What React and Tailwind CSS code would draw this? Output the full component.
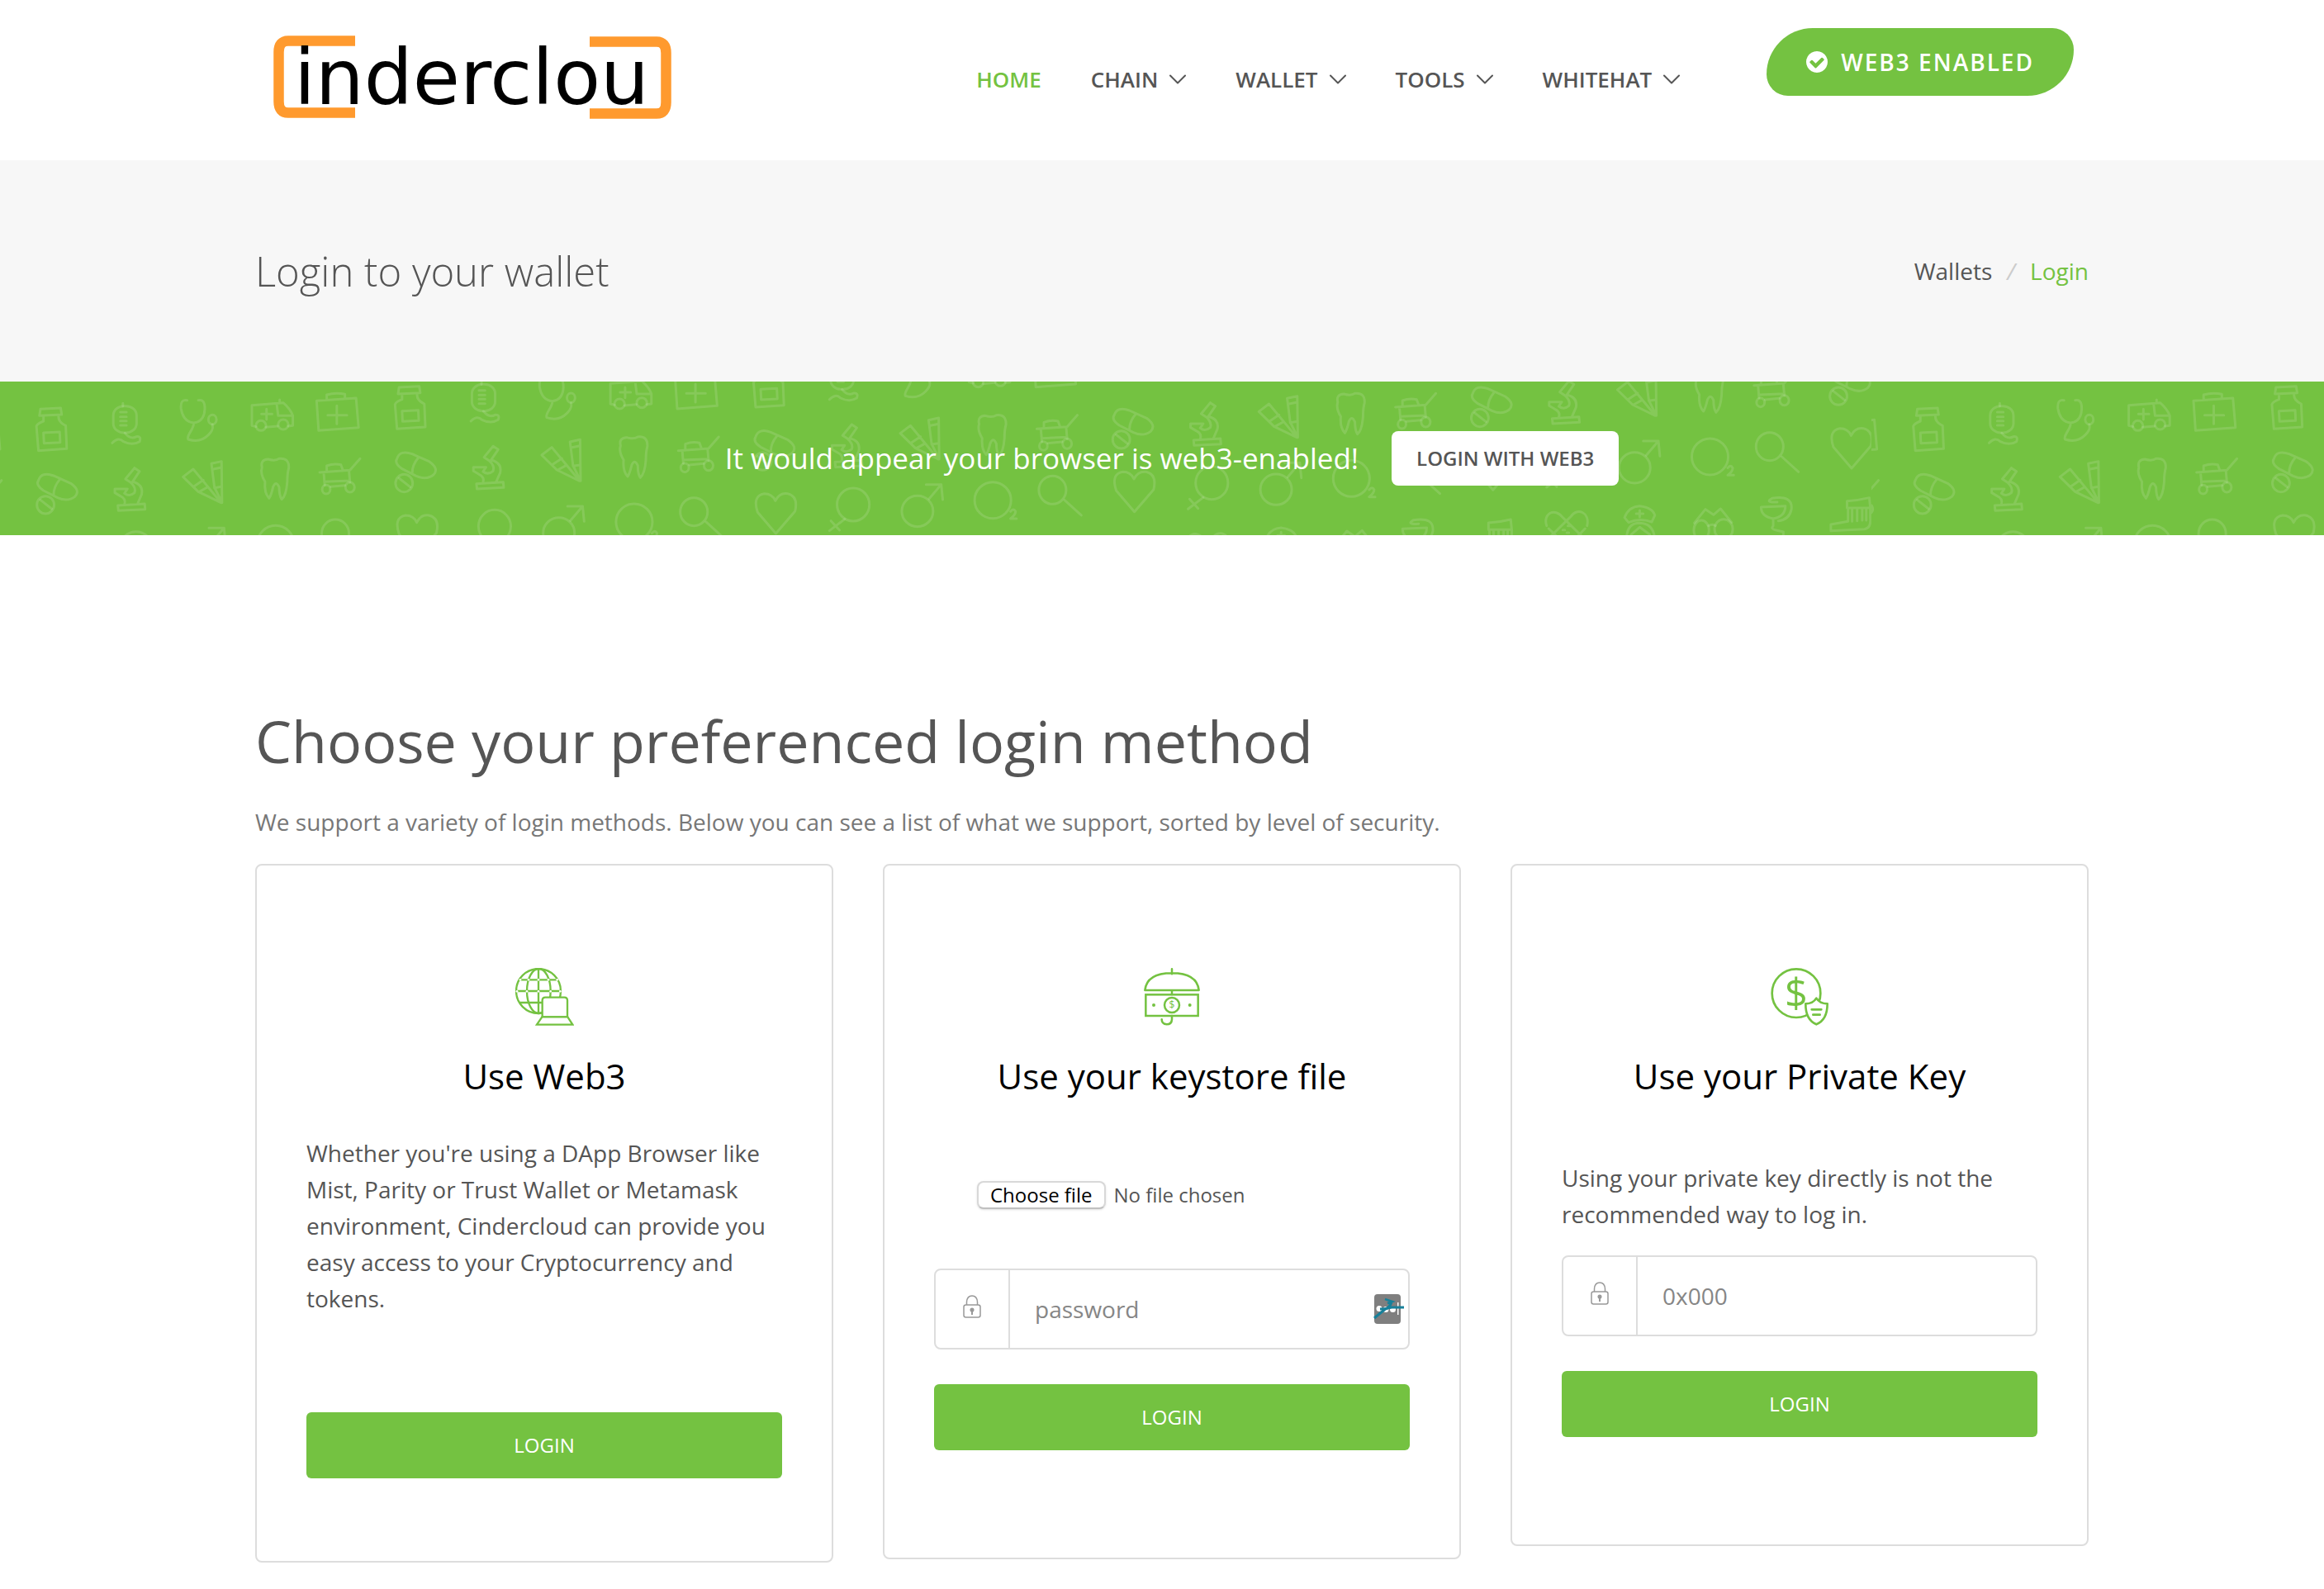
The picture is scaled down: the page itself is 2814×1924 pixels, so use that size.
const NAV = ["Chain", "Wallet", "Tools", "Whitehat"];

function Logo() {
  return (
    <svg viewBox="0 0 482 101" className="h-[101px] w-[482px] overflow-visible" role="img" aria-label="Cindercloud">
      <g fill="none" stroke="#ff9a2e" strokeWidth="12.5">
        <path d="M99 6.500H18Q6.500 6.500 6.500 20V80Q6.500 93.500 18 93.500H99" />
        <path d="M383 7.500H464Q475.500 7.500 475.500 21V81Q475.500 94.500 464 94.500H383" />
      </g>
      <text x="25" y="83" fontSize="93" fontFamily="'DejaVu Sans', sans-serif" fill="#000">
        inderclou
      </text>
    </svg>
  );
}

function Chevron() {
  return (
    <svg viewBox="0 0 20 12" className="h-3 w-5" fill="none" stroke="currentColor" strokeWidth="2" aria-hidden="true">
      <path d="M1 1.500L10 10.500L19 1.500" strokeLinecap="round" strokeLinejoin="round" />
    </svg>
  );
}

function CheckCircle() {
  return (
    <svg viewBox="128 128 1536 1536" className="size-[26px]" fill="currentColor" aria-hidden="true">
      <path d="M1412 734q0-28-18-46l-91-90q-19-19-45-19t-45 19l-408 407-226-226q-19-19-45-19t-45 19l-91 90q-18 18-18 46 0 27 18 45l362 362q19 19 45 19 27 0 46-19l543-543q18-18 18-45zm252 162q0 209-103 385.500t-279.500 279.500-385.500 103-385.500-103-279.500-279.500-103-385.500 103-385.500 279.500-279.500 385.500-103 385.500 103 279.500 279.500 103 385.500z" />
    </svg>
  );
}

function GlobeLaptop() {
  return (
    <svg viewBox="132 96 213 210" className="h-[70px] w-[71px]" fill="none" stroke="#74c241" strokeWidth="7" aria-hidden="true">
      <circle cx="216" cy="180" r="81" />
      <ellipse cx="217" cy="180" rx="43" ry="81" />
      <path d="M216 99V261M148 139H285M136 180H296M148 222H230" />
      <g fill="#fff" stroke="none">
        <circle cx="150" cy="139" r="4" /><circle cx="180" cy="139" r="4" /><circle cx="216" cy="139" r="4" />
        <circle cx="252" cy="139" r="4" /><circle cx="284" cy="139" r="4" /><circle cx="138" cy="181" r="4" />
        <circle cx="174" cy="181" r="4" /><circle cx="216" cy="181" r="4" /><circle cx="260" cy="181" r="4" />
        <circle cx="295" cy="181" r="4" />
      </g>
      <path fill="#fff" d="M230 274V214Q230 203 241 203H310Q321 203 321 214V274Z" />
      <path fill="#fff" d="M229 274H322L340 302H210Z" />
    </svg>
  );
}

function UmbrellaCash() {
  return (
    <svg viewBox="132 96 210 210" className="size-[70px] overflow-visible" fill="none" stroke="#74c241" strokeWidth="7.500" strokeLinecap="round" aria-hidden="true">
      <path d="M237 100V118M139 177Q146 115 237 115Q328 115 335 177ZM237 180V192" strokeLinejoin="round" />
      <rect x="142" y="193" width="190" height="77" />
      <circle cx="237" cy="231" r="27" />
      <path d="M237 270V283Q236 301 218 301Q200 300 200 283" />
      <g fill="#74c241" stroke="none">
        <circle cx="171" cy="231" r="6" />
        <circle cx="302" cy="231" r="6" />
        <text x="237" y="244" fontSize="36" textAnchor="middle" fontFamily="'Open Sans', sans-serif">$</text>
      </g>
    </svg>
  );
}

function CoinShield() {
  return (
    <svg viewBox="102 96 210 210" className="size-[70px] overflow-visible" fill="none" stroke="#74c241" strokeWidth="8" aria-hidden="true">
      <circle cx="195" cy="188" r="88" />
      <text x="195" y="240" fontSize="146" textAnchor="middle" fontFamily="'Open Sans', sans-serif" fill="#74c241" stroke="none">$</text>
      <path fill="#fff" strokeLinejoin="round" d="M268 206Q256 226 229 226Q228 284 268 301Q308 285 308 226Q280 226 268 206Z" />
      <path strokeLinecap="round" d="M251 247H286M256 266H281" />
    </svg>
  );
}

function Lock() {
  return (
    <svg viewBox="0 0 22 28" className="h-7 w-[22px]" fill="none" stroke="#999" strokeWidth="1.500" aria-hidden="true">
      <rect x="1" y="12" width="20" height="15" rx="2.500" />
      <path d="M4.500 12V8.500Q5 1 11 1T17.500 8.500V12" />
      <path d="M11 19V24" strokeWidth="2" />
      <circle cx="11" cy="18" r="1.800" fill="#999" />
    </svg>
  );
}

function PasswordManagerMark() {
  return (
    <svg viewBox="0 0 38 36" className="h-9 w-[38px]" aria-hidden="true">
      <rect x="1" width="32" height="36" rx="4" fill="#7f7f7f" />
      <g fill="#fff">
        <circle cx="7" cy="17.500" r="3.500" />
        <circle cx="15" cy="18.500" r="3.500" />
        <circle cx="23.500" cy="18.500" r="3.500" />
        <rect x="29" y="10" width="1.500" height="15" />
      </g>
      <g fill="none" stroke="#17809a" strokeWidth="3">
        <path d="M1 29L15 17.500L22 16H37" />
        <path d="M8 18L16 17.500L20 14L22 10" />
        <path d="M14 6L23 9L17 11M20 10V16" strokeWidth="2.500" />
      </g>
    </svg>
  );
}

/* Banner doodles: each row of drawings repeats along a slanted line. */
const STEP_X = 709;
const STEP_Y = -79;
const TILE = 3711;

function RowOne() {
  return (
    <>
      <path d="M80 166L120 162L122 186L78 190ZM86 190V210Q74 218 72 228L76 317L132 310L130 226Q114 212 116 190M86 252L118 249L119 287L87 290Z" />
      <rect x="224" y="155" width="46" height="97" rx="21" ry="34" />
      <path d="M238 177H250M238 194H250M238 209H250M238 225H250M243 145V155M222 289Q234 266 244 284Q262 300 276 284Q280 264 270 266Q258 278 247 253" />
      <path d="M370 134Q356 128 358 165Q362 212 383 216Q404 212 405 165Q405 128 392 134M383 216C384 240 368 260 372 276Q396 290 412 260C424 238 420 230 420 222" />
      <ellipse cx="420" cy="204" rx="8" ry="17" />
      <path d="M506 230L498 226V152L560 143Q574 165 579 190V226L570 228M526 232L549 228M547 146L550 190L577 189M517 184H538M527 166V204M553 132V142" />
      <ellipse cx="516" cy="226" rx="10" ry="18" />
      <ellipse cx="560" cy="222" rx="10" ry="18" />
      <path d="M626 136L704 126L709 233L630 244ZM646 132V114Q664 104 682 112V128M648 188H686M666 154V220" />
    </>
  );
}

function RowTwo() {
  return (
    <>
      <path d="M76 425Q82 392 106 408L140 436Q160 462 148 484Q134 504 114 488L86 462Q70 442 76 425ZM118 422Q106 448 106 478M80 496L102 528" />
      <ellipse cx="90" cy="514" rx="17" ry="32" />
      <path d="M266 380L276 392L262 430Q284 440 280 476L272 510M266 380L248 420L258 432Q270 452 266 470Q256 486 246 472L252 456L227 456V470L238 482Q250 492 246 512M233 516L286 510L287 530L234 535Z" />
      <path d="M362 412L382 384L410 446L437 506L392 466ZM384 446L402 424M394 466L410 450M418 364L438 356L439 506L424 450ZM422 384L438 378M424 452L438 448" />
      <path d="M518 378Q514 350 530 348Q544 356 552 346Q572 342 571 380Q568 400 568 430Q566 480 557 494Q552 480 552 450Q546 424 540 448Q536 480 532 490Q522 470 524 430Q514 400 518 378Z" />
      <path d="M632 396L692 388L712 346M646 392V372Q660 362 674 368L678 388M640 396L642 442M690 390L692 432M642 430L692 426M654 448L682 443" />
      <ellipse cx="645" cy="458" rx="8" ry="16" />
      <ellipse cx="692" cy="450" rx="9" ry="18" />
    </>
  );
}

function RowThree() {
  return (
    <>
      <ellipse cx="269" cy="671" rx="32" ry="60" />
      <path d="M252 724L222 766M225 730L242 764" />
      <ellipse cx="396" cy="695" rx="31" ry="56" />
      <path d="M419 650L443 598M413 598H443L446 653" />
      <ellipse cx="545" cy="655" rx="36" ry="66" />
      <path d="M580 696Q586 682 590 696Q590 708 580 722H592" />
      <ellipse cx="663" cy="618" rx="27" ry="51" />
      <path d="M687 655L720 710" />
      <path d="M825 697L789 620Q778 560 802 552Q818 552 824 578Q832 548 848 552Q870 562 863 616Z" />
    </>
  );
}

function RowFour() {
  return (
    <>
      <path d="M3058 590C3050 545 3074 522 3090 560L3140 650M3062 600L3090 650M3138 590C3144 540 3118 522 3106 556L3054 650M3134 600L3108 650M3090 605H3094M3100 590H3104M3098 615H3102" />
      <path d="M3212 560Q3220 520 3242 518Q3268 524 3272 552L3266 576Q3242 560 3220 578ZM3235 546H3249M3242 534V558M3216 640Q3216 580 3242 580Q3270 582 3272 640M3225 622L3242 595L3262 622" />
      <path d="M3350 580L3372 530L3388 550L3402 528L3424 578M3378 590Q3386 582 3392 590" />
      <ellipse cx="3364" cy="606" rx="15" ry="36" />
      <ellipse cx="3408" cy="602" rx="18" ry="36" />
      <path d="M3482 522L3530 518Q3530 556 3506 564Q3482 556 3482 522ZM3506 564V590Q3500 602 3512 606L3526 612V640M3514 504Q3488 506 3504 490Q3545 478 3542 530Q3538 568 3516 572" />
      <path d="M3652 500Q3674 498 3696 488L3698 525H3652ZM3662 530V574M3672 530V572M3682 530V570M3690 530V570M3654 530V574L3620 585V608L3686 602Q3700 600 3698 560V525" />
    </>
  );
}

function Doodles({ row: Row, steps }) {
  return steps.map((k) => (
    <g key={k} transform={`translate(${k * STEP_X} ${k * STEP_Y})`}>
      <Row />
    </g>
  ));
}

function BannerPattern() {
  return (
    <svg className="absolute inset-0 size-full" aria-hidden="true">
      <defs>
        <clipPath id="tile">
          <rect x="-11" y="0" width={TILE} height="700" />
        </clipPath>
      </defs>
      <g
        transform="scale(.6124 .3333) translate(0 -66)"
        fill="none"
        stroke="#fff"
        strokeOpacity=".13"
        strokeLinecap="round"
        strokeLinejoin="round"
        className="[&_*]:[stroke-width:3px] [&_*]:[vector-effect:non-scaling-stroke]"
      >
        {[0, TILE].map((x) => (
          <g key={x} transform={`translate(${x} 0)`}>
            <g clipPath="url(#tile)">
              <Doodles row={RowOne} steps={[-1, 0, 1, 2]} />
              <Doodles row={RowTwo} steps={[-1, 0, 1, 2, 3, 4, 5]} />
              <Doodles row={RowThree} steps={[0, 1, 2, 3, 4]} />
              <Doodles row={RowFour} steps={[-1, 0]} />
            </g>
          </g>
        ))}
      </g>
    </svg>
  );
}

function Container({ className = "", children }) {
  return (
    <div className="pl-6">
      <div className={`mx-auto max-w-[2280px] px-[30px] ${className}`}>{children}</div>
    </div>
  );
}

function LoginButton() {
  return (
    <button type="submit" className="h-20 w-full rounded-md bg-[#74c241] text-2xl text-white">
      LOGIN
    </button>
  );
}

function Field({ id, label, type, placeholder, children }) {
  return (
    <div className="flex h-[98px] items-stretch rounded-lg border-2 border-[#ddd]">
      <label
        htmlFor={id}
        aria-label={label}
        className="flex w-[90px] shrink-0 items-center justify-center border-r-2 border-[#ddd] pb-1.5"
      >
        <Lock />
      </label>
      <input
        id={id}
        type={type}
        placeholder={placeholder}
        className="min-w-0 flex-1 bg-transparent pl-[30px] text-[28px] outline-none placeholder:text-[#868686]"
      />
      {children}
    </div>
  );
}

function Card({ icon, title, className, children }) {
  return (
    <section className={`rounded-lg border-2 border-[#ddd] px-[60px] pt-[124px] ${className}`}>
      <div className="flex justify-center">{icon}</div>
      <h3 className="mt-[30px] text-center text-[42px] leading-[62px] text-black">{title}</h3>
      {children}
    </section>
  );
}

export default function App() {
  return (
    <div className="min-h-screen bg-white font-['Open_Sans',sans-serif] text-[28px] leading-[44px] text-[#555]">
      <header>
        <Container className="flex min-h-[194px] items-center">
          <a href="#home" className="mb-2 ml-[22px]">
            <Logo />
          </a>
          <nav className="mb-0.5 ml-auto flex items-center gap-[60px] text-[26px] font-semibold uppercase">
            <a href="#home" className="text-[#74c241]">Home</a>
            {NAV.map((item) => (
              <button key={item} type="button" className="flex items-center gap-3.5 uppercase">
                {item}
                <Chevron />
              </button>
            ))}
          </nav>
          <a
            href="#web3"
            className="mt-[34px] mr-[18px] ml-[105px] flex h-[82px] items-center gap-4 self-start rounded-tl-[56px] rounded-tr-[26px] rounded-br-[56px] rounded-bl-[26px] bg-[#74c241] px-12 font-semibold tracking-[2px] text-white"
          >
            <CheckCircle />
            WEB3 ENABLED
          </a>
        </Container>
      </header>

      <div className="bg-[#f7f7f7]">
        <Container className="flex items-center justify-between py-[100px]">
          <h1 className="text-[49px] leading-[68px] font-light">Login to your wallet</h1>
          <nav aria-label="Breadcrumb" className="flex items-center gap-[18px]">
            <a href="#wallets">Wallets</a>
            <span className="text-[#ccc] italic">/</span>
            <a href="#login" className="text-[#74c241]">Login</a>
          </nav>
        </Container>
      </div>

      <div className="relative overflow-hidden bg-[#74c241]">
        <BannerPattern />
        <Container className="relative flex items-center justify-center gap-10 py-[60px]">
          <p className="text-[35px] text-white">It would appear your browser is web3-enabled!</p>
          <button type="button" className="h-[66px] rounded-lg bg-white px-[30px] text-2xl font-semibold">
            LOGIN WITH WEB3
          </button>
        </Container>
      </div>

      <main>
        <Container className="pt-[200px]">
          <h2 className="text-[70px] leading-[98px]">Choose your preferenced login method</h2>
          <p className="mt-[27px] text-[#777]">
            We support a variety of login methods. Below you can see a list of what we support, sorted by level of security.
          </p>

          <div className="mt-[29px] grid grid-cols-3 items-start gap-[60px]">
            <Card icon={<GlobeLaptop />} title="Use Web3" className="pb-[100px]">
              <p className="mt-10">
                Whether you're using a DApp Browser like Mist, Parity or Trust Wallet or Metamask environment, Cindercloud
                can provide you easy access to your Cryptocurrency and tokens.
              </p>
              <form className="mt-[116px]">
                <LoginButton />
              </form>
            </Card>

            <Card icon={<UmbrellaCash />} title="Use your keystore file" className="pb-[130px]">
              <form className="mt-24">
                <div className="ml-[52px] flex items-center gap-2.5 text-2xl">
                  <input id="keystore" type="file" className="sr-only" />
                  <label
                    htmlFor="keystore"
                    className="flex h-[34px] items-center rounded-lg border-2 border-[#d8d8d8] border-b-[#c0c0c0] bg-white px-3.5 text-black shadow-sm"
                  >
                    Choose file
                  </label>
                  <span>No file chosen</span>
                </div>
                <div className="mt-[72px] mb-[42px]">
                  <Field id="password" label="Password" type="password" placeholder="password">
                    <span className="mr-1 self-center">
                      <PasswordManagerMark />
                    </span>
                  </Field>
                </div>
                <LoginButton />
              </form>
            </Card>

            <Card icon={<CoinShield />} title="Use your Private Key" className="pb-[130px]">
              <p className="mt-[70px]">Using your private key directly is not the recommended way to log in.</p>
              <form className="mt-7">
                <div className="mb-[42px]">
                  <Field id="private-key" label="Private key" type="text" placeholder="0x000" />
                </div>
                <LoginButton />
              </form>
            </Card>
          </div>
        </Container>
      </main>
    </div>
  );
}
